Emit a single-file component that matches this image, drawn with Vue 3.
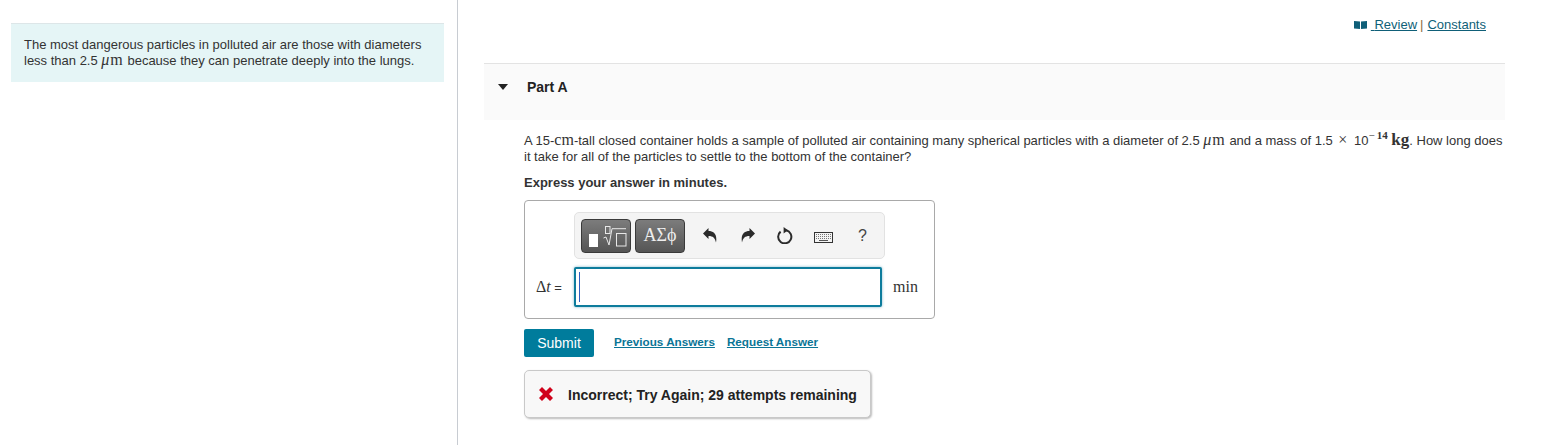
<template>
  <div class="page">
    <aside class="intro">
      <div class="intro-box">
        The most dangerous particles in polluted air are those with diameters less than 2.5 <span class="math micro"><i>μ</i>m</span> because they can penetrate deeply into the lungs.
      </div>
    </aside>

    <main class="main">
      <div class="top-links">
        <a class="link-dark">
          <svg class="book" viewBox="0 0 13 8" aria-hidden="true">
            <path d="M0 0 L6 0.5 V8 L0 7.5 Z M7 0.5 L13 0 V7.5 L7 8 Z" fill="#0f5f78" />
          </svg>
          <span>&nbsp;</span>Review</a>
        <span class="sep">|</span>
        <a class="link-dark">Constants</a>
      </div>

      <div class="part-head">
        <span class="caret"></span>
        <span class="part-title">Part A</span>
      </div>

      <div class="part-body">
        <p class="question">
          A 15-<span class="math">cm</span>-tall closed container holds a sample of polluted air containing many spherical particles with a diameter of 2.5 <span class="math micro"><i>μ</i>m</span> and a mass of 1.5 <span class="math times">×</span> 10<sup class="exp"><span class="minus">−</span>14</sup> <span class="math kg">kg</span>. How long does it take for all of the particles to settle to the bottom of the container?
        </p>
        <p class="express">Express your answer in minutes.</p>

        <div class="answer-box">
          <div class="toolbar">
            <button class="tool-btn templates" type="button">
              <span class="solid"></span>
              <svg class="radical" viewBox="0 0 24 24" aria-hidden="true">
                <rect x="2.5" y="2.5" width="4.5" height="7" fill="none" stroke="#e8e8e8" />
                <path d="M0.5 14 L3 13 L6 21 L9 4.7 H23" fill="none" stroke="#e8e8e8" />
                <rect x="13.5" y="9.5" width="9.5" height="12.5" fill="none" stroke="#e8e8e8" />
              </svg>
            </button>
            <button class="tool-btn greek" type="button">ΑΣϕ</button>
            <span class="tool-icons">
              <svg class="ic" viewBox="0 0 14 15" aria-hidden="true">
                <path d="M0 5.5 L5.5 0 V3 C10.5 3 14.5 6 13 14.5 C12 10 10 8 5.5 8 V11 Z" fill="#2b2b2b" />
              </svg>
              <svg class="ic redo" viewBox="0 0 14 15" aria-hidden="true">
                <path d="M14 5.5 L8.5 0 V3 C3.5 3 -0.5 6 1 14.5 C2 10 4 8 8.5 8 V11 Z" fill="#2b2b2b" />
              </svg>
              <svg class="ic reload" viewBox="0 0 16 17" aria-hidden="true">
                <path d="M9.2 3.3 A6.6 6.6 0 1 1 3.6 4.6" fill="none" stroke="#2b2b2b" stroke-width="2" />
                <path d="M6.6 0 L11 3.2 L6.6 6.4 Z" fill="#2b2b2b" />
              </svg>
              <svg class="ic kb" viewBox="0 0 19 11" aria-hidden="true">
                <rect x="0.5" y="0.5" width="18" height="10" fill="#f4f4f4" stroke="#333" />
                <path d="M2 2.5 H17 M2 4.5 H17 M2 6.5 H17" stroke="#777" stroke-dasharray="1 1" />
                <path d="M5 8.5 H14" stroke="#555" />
              </svg>
              <span class="help">?</span>
            </span>
          </div>

          <div class="entry-row">
            <span class="label"><span class="math">Δ<i>t</i></span> =</span>
            <div class="entry"><span class="cursor"></span></div>
            <span class="math unit">min</span>
          </div>
        </div>

        <div class="actions">
          <button class="submit" type="button">Submit</button>
          <a class="link-action first">Previous Answers</a>
          <a class="link-action">Request Answer</a>
        </div>

        <div class="feedback">
          <svg class="cross" viewBox="0 0 14 14" aria-hidden="true">
            <path d="M3 0 L7 4 L11 0 L14 3 L10 7 L14 11 L11 14 L7 10 L3 14 L0 11 L4 7 L0 3 Z" fill="#d0021b" />
          </svg>
          <span class="feedback-text">Incorrect; Try Again; 29 attempts remaining</span>
        </div>
      </div>
    </main>
  </div>
</template>

<script setup>
</script>

<style>
html, body {
  margin: 0;
  background: #fff;
  overflow: hidden;
}
</style>

<style scoped>
.page {
  display: flex;
  width: 1547px;
  height: 445px;
  font-family: "Liberation Sans", Arial, sans-serif;
  font-size: 13px;
  color: #333;
}

.math {
  font-family: "Liberation Serif", serif;
  font-size: 16px;
  line-height: 0;
}

.micro {
  letter-spacing: 1px;
}

.times {
  margin: 0 3px 0 2px;
}

.intro {
  box-sizing: border-box;
  width: 458px;
  height: 445px;
  padding: 23px 13px 0 11px;
  border-right: 1px solid #c8ccd2;
}

.intro-box {
  box-sizing: border-box;
  height: 59px;
  padding: 13px 13px 0;
  background: #e5f5f6;
  border-top: 1px solid #dde6e8;
  line-height: 16px;
}

.main {
  flex: 1;
  min-width: 0;
  padding-right: 42px;
  padding-left: 26px;
}

.top-links {
  height: 63px;
  box-sizing: border-box;
  padding: 17px 19px 0 0;
  display: flex;
  justify-content: flex-end;
  align-items: baseline;
  line-height: 16px;
  color: #8a6d3b;
}

.link-dark {
  color: #0f5f78;
  text-decoration: underline;
}

.book {
  width: 13px;
  height: 8px;
  margin-right: 4px;
}

.sep {
  margin: 0 4px 0 3px;
}

.part-head {
  box-sizing: border-box;
  height: 57px;
  display: flex;
  align-items: center;
  padding: 0 0 10px 14px;
  background: #fafafa;
  border-top: 1px solid #e3e3e3;
}

.caret {
  width: 0;
  height: 0;
  border-left: 5.5px solid transparent;
  border-right: 5.5px solid transparent;
  border-top: 6px solid #222;
  margin-right: 19px;
}

.part-title {
  font-size: 14px;
  font-weight: 700;
  color: #222;
}

.part-body {
  padding-left: 40px;
}

.question {
  margin: 13px 0 0;
  line-height: 16px;
}

.exp {
  font-family: "Liberation Serif", serif;
  font-size: 11px;
  font-weight: 700;
  line-height: 0;
  vertical-align: 6px;
}

.minus {
  font-weight: 400;
  letter-spacing: 2px;
}

.kg {
  font-weight: 700;
  font-size: 17px;
}

.express {
  margin: 10px 0 0;
  font-weight: 700;
  line-height: 16px;
}

.answer-box {
  box-sizing: border-box;
  width: 411px;
  height: 119px;
  margin-top: 9px;
  padding: 11px 0 0 49px;
  border: 1px solid #a9a9a9;
  border-radius: 4px;
}

.toolbar {
  box-sizing: border-box;
  width: 311px;
  height: 47px;
  display: flex;
  align-items: center;
  padding-left: 6px;
  gap: 4px;
  background: #f4f4f4;
  border: 1px solid #e2e2e2;
  border-radius: 5px;
}

.tool-btn {
  box-sizing: border-box;
  height: 34px;
  padding: 0;
  display: flex;
  align-items: center;
  justify-content: center;
  color: #eee;
  background: linear-gradient(#7c7c7c, #555);
  border: 1px solid #3a3a3a;
  border-radius: 4px;
}

.templates {
  width: 50px;
  justify-content: flex-start;
  padding-left: 7px;
  gap: 5px;
}

.solid {
  width: 9px;
  height: 13px;
  margin-top: 10px;
  background: #fff;
}

.radical {
  width: 24px;
  height: 24px;
  margin-top: 1px;
}

.greek {
  width: 50px;
  font-family: "Liberation Serif", serif;
  font-size: 18px;
}

.tool-icons {
  display: flex;
  align-items: center;
  margin-left: 14px;
  gap: 22px;
}

.ic {
  width: 14px;
  height: 15px;
}

.redo {
  margin-left: 2px;
}

.reload {
  width: 16px;
  height: 17px;
}

.kb {
  width: 19px;
  height: 11px;
  margin: 3px 0 0 -1px;
}

.help {
  margin-left: 3px;
  font-size: 16px;
  color: #444;
}

.entry-row {
  display: flex;
  align-items: center;
  margin: 8px 0 0 -38px;
}

.label {
  width: 38px;
  white-space: nowrap;
}

.entry {
  box-sizing: border-box;
  width: 308px;
  height: 40px;
  padding: 3px;
  background: #fff;
  border: 2px solid #0d7c9c;
  border-radius: 2px;
  box-shadow: 0 0 3px #7fb6c8;
}

.cursor {
  display: block;
  width: 1px;
  height: 100%;
  background: #2f5fc0;
}

.unit {
  margin-left: 11px;
}

.actions {
  display: flex;
  align-items: flex-start;
  margin-top: 10px;
}

.submit {
  box-sizing: border-box;
  width: 70px;
  height: 28px;
  padding: 0;
  font-family: inherit;
  font-size: 14px;
  color: #fff;
  background: #007c9c;
  border: 0;
  border-radius: 2px;
}

.link-action {
  margin: 5px 0 0 12px;
  font-size: 11.7px;
  line-height: 16px;
  color: #0b7596;
  text-decoration: underline;
  font-weight: 700;
}

.link-action.first {
  margin-left: 20px;
}

.feedback {
  box-sizing: border-box;
  width: 347px;
  height: 48px;
  display: flex;
  align-items: center;
  gap: 15px;
  margin-top: 13px;
  padding-left: 14px;
  font-size: 14px;
  font-weight: 700;
  color: #222;
  background: #f8f8f8;
  border: 1px solid #c9c9c9;
  border-radius: 5px;
  box-shadow: 1px 1px 2px #bbb;
}

.cross {
  width: 14px;
  height: 14px;
  flex: none;
}

.feedback-text {
  padding-top: 2px;
}
</style>
